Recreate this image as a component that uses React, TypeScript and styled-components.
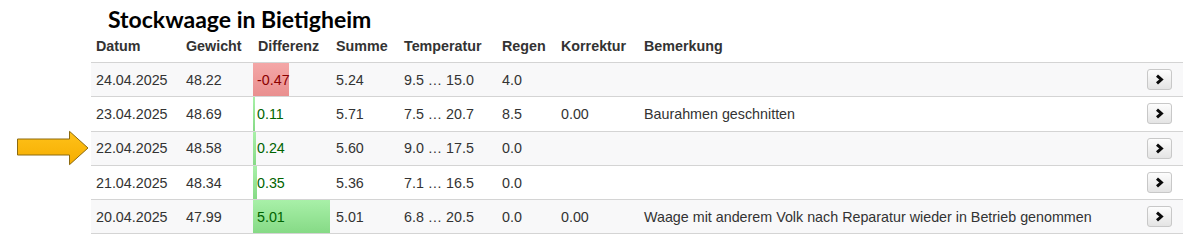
import React from "react";
import styled, { createGlobalStyle } from "styled-components";

const GlobalStyle = createGlobalStyle`
  html, body {
    margin: 0;
    padding: 0;
    background: #ffffff;
  }
  body {
    font-family: "Liberation Sans", Arial, sans-serif;
  }
`;

type Row = {
  date: string;
  weight: string;
  diff: string;
  bar: number;
  sum: string;
  temp: string;
  rain: string;
  corr: string;
  note: string;
  marked?: boolean;
};

const rows: Row[] = [
  { date: "24.04.2025", weight: "48.22", diff: "-0.47", bar: 36, sum: "5.24", temp: "9.5 … 15.0", rain: "4.0", corr: "", note: "" },
  { date: "23.04.2025", weight: "48.69", diff: "0.11", bar: 2, sum: "5.71", temp: "7.5 … 20.7", rain: "8.5", corr: "0.00", note: "Baurahmen geschnitten" },
  { date: "22.04.2025", weight: "48.58", diff: "0.24", bar: 3, sum: "5.60", temp: "9.0 … 17.5", rain: "0.0", corr: "", note: "", marked: true },
  { date: "21.04.2025", weight: "48.34", diff: "0.35", bar: 4, sum: "5.36", temp: "7.1 … 16.5", rain: "0.0", corr: "", note: "" },
  { date: "20.04.2025", weight: "47.99", diff: "5.01", bar: 77, sum: "5.01", temp: "6.8 … 20.5", rain: "0.0", corr: "0.00", note: "Waage mit anderem Volk nach Reparatur wieder in Betrieb genommen" },
];

const colWidths = [90, 72, 78, 68, 98, 59, 83, 501, 43];

const Page = styled.div`
  padding: 6px 0 0 91px;
  width: 1092px;
`;

const Title = styled.h1`
  margin: 0 0 3px 17px;
  font-family: Lato, "Open Sans", sans-serif;
  font-weight: 700;
  font-size: 23px;
  line-height: 26px;
  color: #000;
`;

const Table = styled.table`
  width: 1092px;
  border-collapse: collapse;
  table-layout: fixed;
  font-size: 14.3px;
  color: #333;
`;

const Th = styled.th`
  text-align: left;
  font-weight: 700;
  padding: 3px 0 8px 5px;
  line-height: 16px;
  color: #333;
  white-space: nowrap;
`;

const Tr = styled.tr<{ $odd: boolean }>`
  height: 34.3px;
  background: ${(p) => (p.$odd ? "#f8f8f9" : "#ffffff")};
  border-top: 1px solid #d4d4d4;
  border-bottom: 1px solid #d4d4d4;
`;

const Td = styled.td`
  padding: 0 0 0 5px;
  line-height: 16px;
  white-space: nowrap;
`;

const DiffTd = styled(Td)<{ $neg: boolean; $bar: number }>`
  padding-left: 4px;
  color: ${(p) => (p.$neg ? "#8b0000" : "#006400")};
  background-image: ${(p) =>
    p.$neg
      ? "linear-gradient(#f4a7a7, #e98f8f)"
      : "linear-gradient(#a8f0a8, #86da86)"};
  background-repeat: no-repeat;
  background-size: ${(p) => p.$bar}px 100%;
`;

const MarkerTd = styled(Td)`
  position: relative;
`;

const ActionTd = styled.td`
  text-align: right;
  padding: 0 11px 0 0;
`;

const NextButton = styled.button`
  display: inline-flex;
  align-items: center;
  justify-content: center;
  width: 25px;
  height: 21px;
  padding: 0;
  vertical-align: middle;
  border: 1px solid #c8c8c8;
  border-radius: 3px;
  background: linear-gradient(#fdfdfd, #e4e4e4);
  cursor: pointer;
`;

const Arrow = styled.svg`
  position: absolute;
  left: -74px;
  top: 50%;
  transform: translateY(-50%);
`;

const Chevron = () => (
  <svg width="9" height="11" viewBox="0 0 9 11">
    <polyline
      points="2,1.6 6.4,5.5 2,9.4"
      fill="none"
      stroke="#0a0a0a"
      strokeWidth="3"
      strokeLinejoin="miter"
    />
  </svg>
);

const MarkerArrow = () => (
  <Arrow width="72" height="35" viewBox="0 0 72 35">
    <defs>
      <linearGradient id="arrowFill" x1="0" y1="0" x2="0" y2="1">
        <stop offset="0" stopColor="#ffc21a" />
        <stop offset="1" stopColor="#f5ad00" />
      </linearGradient>
    </defs>
    <polygon
      points="0.5,8.5 52.5,8.5 52.5,0.8 71,17.5 52.5,34.2 52.5,24.5 0.5,24.5"
      fill="url(#arrowFill)"
      stroke="#8c6a10"
      strokeWidth="1"
    />
  </Arrow>
);

export default function App() {
  return (
    <>
      <GlobalStyle />
      <Page>
        <Title>Stockwaage in Bietigheim</Title>
        <Table>
          <colgroup>
            {colWidths.map((w, i) => (
              <col key={i} style={{ width: w }} />
            ))}
          </colgroup>
          <thead>
            <tr>
              <Th>Datum</Th>
              <Th>Gewicht</Th>
              <Th>Differenz</Th>
              <Th>Summe</Th>
              <Th>Temperatur</Th>
              <Th>Regen</Th>
              <Th>Korrektur</Th>
              <Th>Bemerkung</Th>
              <Th />
            </tr>
          </thead>
          <tbody>
            {rows.map((r, i) => (
              <Tr key={r.date} $odd={i % 2 === 0}>
                <MarkerTd>
                  {r.marked && <MarkerArrow />}
                  {r.date}
                </MarkerTd>
                <Td>{r.weight}</Td>
                <DiffTd $neg={r.diff.startsWith("-")} $bar={r.bar}>
                  {r.diff}
                </DiffTd>
                <Td>{r.sum}</Td>
                <Td>{r.temp}</Td>
                <Td>{r.rain}</Td>
                <Td>{r.corr}</Td>
                <Td>{r.note}</Td>
                <ActionTd>
                  <NextButton aria-label="Details">
                    <Chevron />
                  </NextButton>
                </ActionTd>
              </Tr>
            ))}
          </tbody>
        </Table>
      </Page>
    </>
  );
}
